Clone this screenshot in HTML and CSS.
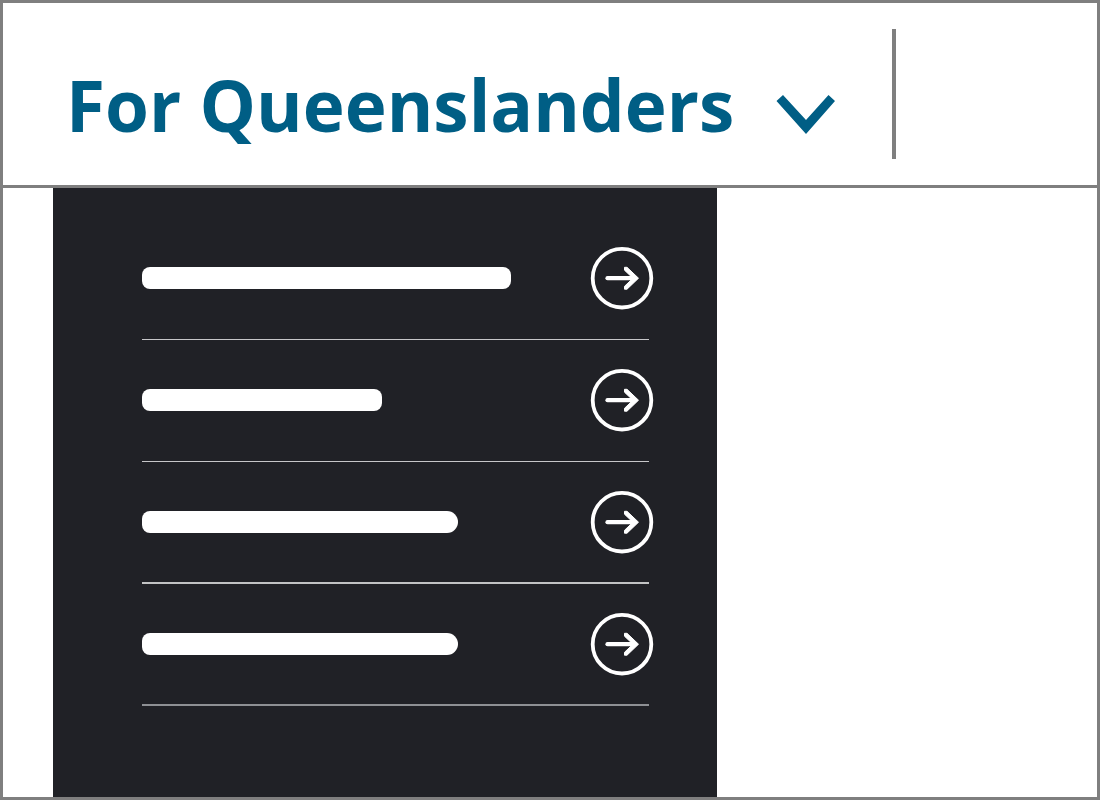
FILE: index.html
```html
<!DOCTYPE html>
<html lang="en">
<head>
<meta charset="utf-8">
<title>For Queenslanders</title>
<link rel="stylesheet" href="styles.css">
</head>
<body>
<div class="frame">
  <header class="header">
    <button class="menu-toggle" type="button" aria-expanded="true" aria-controls="menu">
      <span class="menu-label">For Queenslanders</span>
      <svg class="chevron" viewBox="0 0 60 40" aria-hidden="true"><path d="M0.500 6L7 0L30 25L52.500 0L59 6L30 39Z" fill="currentColor"/></svg>
    </button>
    <span class="divider"></span>
  </header>
  <nav class="menu" id="menu" aria-label="For Queenslanders">
    <ul class="menu-list">
      <li><a class="menu-item" href="#" aria-label="Menu item 1"><span class="bar bar-long"></span><svg class="arrow" viewBox="0 0 64 64" aria-hidden="true"><use href="#arrow"/></svg></a></li>
      <li><a class="menu-item" href="#" aria-label="Menu item 2"><span class="bar bar-short"></span><svg class="arrow" viewBox="0 0 64 64" aria-hidden="true"><use href="#arrow"/></svg></a></li>
      <li><a class="menu-item rule-thick" href="#" aria-label="Menu item 3"><span class="bar bar-medium"></span><svg class="arrow" viewBox="0 0 64 64" aria-hidden="true"><use href="#arrow"/></svg></a></li>
      <li><a class="menu-item rule-thick rule-dim" href="#" aria-label="Menu item 4"><span class="bar bar-medium"></span><svg class="arrow" viewBox="0 0 64 64" aria-hidden="true"><use href="#arrow"/></svg></a></li>
    </ul>
  </nav>
</div>
<svg class="symbols" aria-hidden="true">
  <symbol id="arrow" viewBox="0 0 64 64">
    <circle cx="32" cy="32.200" r="29.300" fill="none" stroke="#fff" stroke-width="3.800"/>
    <path d="M17.500 32.200H45" fill="none" stroke="#fff" stroke-width="4.200" stroke-linecap="round"/>
    <path d="M34.500 21.300H37L48.500 32.200L37 43.200H34.500V40.300L43 32.200L34.500 24.200Z" fill="#fff" stroke="#fff" stroke-width="1" stroke-linejoin="round"/>
  </symbol>
</svg>
</body>
</html>
```
FILE: styles.css
```css
* { box-sizing: border-box; }
body { margin: 0; background: #fff; font-family: "Open Sans", "Noto Sans", sans-serif; }
.frame { display: flex; flex-direction: column; min-height: 100vh; border: 3px solid #7f7f7f; }
.header { display: flex; align-items: flex-start; padding: 26px 0 26px 63px; border-bottom: 3px solid #7f7f7f; }
.menu-toggle { display: flex; align-items: flex-start; gap: 42px; height: 130px; padding: 28px 0 0; border: 0; background: none; color: #005e85; font: inherit; cursor: pointer; }
.menu-label { font-size: 71px; font-weight: 700; line-height: 96px; white-space: nowrap; }
.chevron { width: 60px; height: 40px; margin-top: 38px; }
.divider { width: 4px; height: 130px; margin-left: 56px; background: #7f7f7f; }
.menu { flex: 1; width: 664px; max-width: 100%; margin-left: 50px; padding: 30px 64px 88px 89px; background: #202126; }
.menu-list { margin: 0; padding: 0; list-style: none; }
.menu-item { display: flex; align-items: center; justify-content: space-between; height: 122px; margin-right: 4px; padding-bottom: 1px; border-bottom: 1px solid #c7c7c9; }
.rule-thick { padding-bottom: 0; border-bottom: 2px solid #c2c3c4; }
.rule-dim { border-bottom-color: #8e9094; }
.bar { height: 22px; border-radius: 8px; background: #fff; }
.bar-long { width: 369px; }
.bar-short { width: 240px; }
.bar-medium { width: 316px; border-radius: 8px 11px 11px 8px; }
.arrow { width: 64px; height: 64px; margin-right: -5px; }
.symbols { display: none; }
```
